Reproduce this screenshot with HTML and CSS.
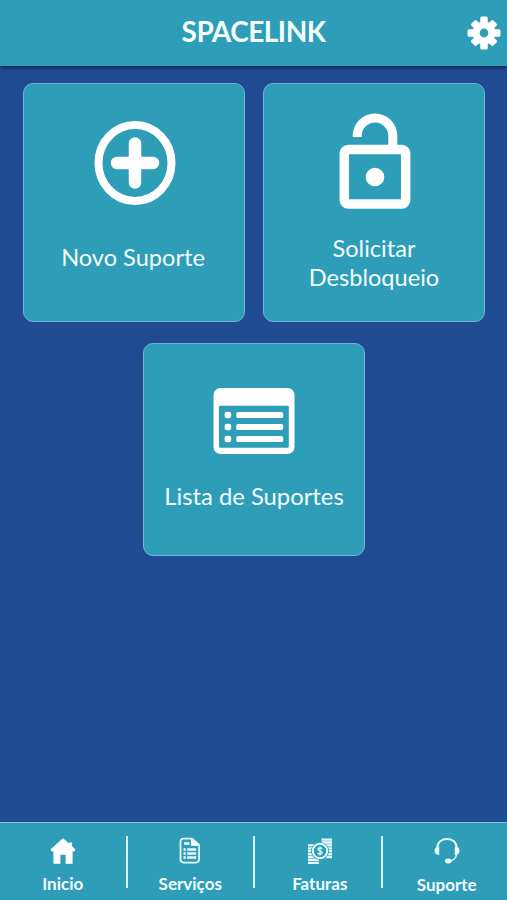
FILE: index.html
```html
<!DOCTYPE html>
<html lang="pt-BR">
<head>
    <meta charset="utf-8">
    <title>Spacelink</title>
    <link rel="stylesheet" href="styles.css">
</head>
<body>
    <header class="header">
        <h1>SPACELINK</h1>
        <button class="settings" aria-label="Configurações">
            <svg width="34" height="34" viewBox="-17 -17 34 34">
                <g stroke="#fff" stroke-width="3" stroke-linejoin="round" fill="#fff">
                    <path d="M-2.2-15h4.4v30h-4.4zM-15-2.2v4.4h30v-4.4z"/>
                    <path transform="rotate(45)" d="M-2.2-14h4.4v28h-4.4zM-14-2.2v4.4h28v-4.4z"/>
                </g>
                <circle r="11.5" fill="#fff"/>
                <circle class="hole" r="4.4"/>
            </svg>
        </button>
    </header>

    <main class="cards">
        <a class="card card-new">
            <svg width="82" height="84" viewBox="0 0 82 84" fill="none" stroke="#fff">
                <ellipse cx="41" cy="42" rx="36.5" ry="38" stroke-width="8"/>
                <path d="M41 22.5v39M23 42h36" stroke-width="12.5" stroke-linecap="round"/>
            </svg>
            <span>Novo Suporte</span>
        </a>
        <a class="card card-unlock">
            <svg width="72" height="96" viewBox="0 0 72 96" fill="none" stroke="#fff">
                <rect x="5.3" y="36.5" width="61.4" height="54.5" rx="4" stroke-width="9.5"/>
                <path d="M18.2 24V22.8a17.8 17.8 0 0 1 35.6 0V36" stroke-width="9"/>
                <circle cx="36" cy="64" r="9.3" fill="#fff" stroke="none"/>
            </svg>
            <span>Solicitar<br>Desbloqueio</span>
        </a>
        <a class="card card-list">
            <svg width="82" height="66" viewBox="0 0 82 66" fill="#fff">
                <path fill-rule="evenodd" d="M7.5 0h67a7 7 0 0 1 7 7v52a7 7 0 0 1-7 7h-67a7 7 0 0 1-7-7V7a7 7 0 0 1 7-7zM7.2 17.7a1.2 1.2 0 0 0-1.2 1.2v39.6a1.2 1.2 0 0 0 1.2 1.2h67.4a1.2 1.2 0 0 0 1.2-1.2V18.9a1.2 1.2 0 0 0-1.2-1.2z"/>
                <rect x="11.6" y="23.7" width="6.6" height="6.6" rx="2.4"/>
                <rect x="11.6" y="35.7" width="6.6" height="6.6" rx="2.4"/>
                <rect x="11.6" y="47.7" width="6.6" height="6.6" rx="2.4"/>
                <rect x="23.2" y="23.9" width="47" height="6.2" rx="1.8"/>
                <rect x="23.2" y="35.9" width="47" height="6.2" rx="1.8"/>
                <rect x="23.2" y="47.9" width="47" height="6.2" rx="1.8"/>
            </svg>
            <span>Lista de Suportes</span>
        </a>
    </main>

    <nav class="tabbar">
        <a class="tab">
            <svg width="28" height="28" viewBox="0 0 28 28" fill="#fff" stroke="#fff" stroke-linejoin="round">
                <path d="M14 2L2.2 12.6l1 1.4H5v12.2h5.8v-9h6.4v9H23V14h1.8l1-1.4-3.3-3V6h-1.8v2z" stroke-width="1.2"/>
            </svg>
            <span>Inicio</span>
        </a>
        <a class="tab">
            <svg width="28" height="28" viewBox="0 0 28 28" fill="none" stroke="#e9fbff">
                <path d="M7.5 1.6h8.6l7 6.4v14.6a3 3 0 0 1-3 3H7.5a3 3 0 0 1-3-3v-18a3 3 0 0 1 3-3z" stroke-width="1.8"/>
                <path d="M15.5 1.6v6.9H23z" fill="#e9fbff"/>
                <path d="M8 6.5h5.5" stroke-width="2.6"/>
                <path d="M7.5 12.5h2.3M7.5 16.5h2.3M7.5 20.5h2.3M11.2 12.5h9M11.2 16.5h9M11.2 20.5h9" stroke-width="2.6"/>
            </svg>
            <span>Serviços</span>
        </a>
        <a class="tab tab-bills">
            <svg width="28" height="28" viewBox="0 0 28 28" fill="none" stroke="#e9fbff">
                <path d="M15.5 2.6H26M15.5 5.5H26M16 8.4h10M18 11.3h8M19 14.2h7M19 17.1h7M17 20h9" stroke-width="2.3"/>
                <path d="M2 8.4h8M2 11.3h6M2 14.2h5M2 17.1h6M2 20h9M2 22.9h11M2 25.8h11" stroke-width="2.3"/>
                <circle class="coin-gap" cx="14" cy="14" r="9" stroke="none"/>
                <circle cx="14" cy="14" r="7.2" stroke-width="2"/>
                <path d="M16.2 11.8c-.5-1.3-4.3-1.4-4.3.5s4.3 1.3 4.3 3.3-3.8 2-4.5.4M14 9.4v9.2" stroke-width="1.3"/>
            </svg>
            <span>Faturas</span>
        </a>
        <a class="tab tab-support">
            <svg width="28" height="28" viewBox="0 0 28 28" fill="none" stroke="#e9fbff">
                <path d="M4.2 12C4.2 5.5 8.2 1.9 14 1.9S23.8 5.5 23.8 12" stroke-width="2"/>
                <path d="M23.5 17c-.4 4.5-3.2 6.5-7 7" stroke-width="1.5"/>
                <path d="M6.2 9.5V18C3 18 1.5 16 1.5 13.7s1.5-4.2 4.7-4.2zM21.8 9.5V18c3.2 0 4.7-2 4.7-4.3s-1.5-4.2-4.7-4.2z" fill="#e9fbff" stroke="none"/>
                <ellipse cx="15.3" cy="24" rx="3.4" ry="2.5" fill="#e9fbff" stroke="none"/>
            </svg>
            <span>Suporte</span>
        </a>
    </nav>
</body>
</html>
```

FILE: styles.css
```css
* {
    box-sizing: border-box;
}

body {
    margin: 0;
    height: 100vh;
    display: flex;
    flex-direction: column;
    overflow: hidden;
    background-color: #1f4b93;
    color: #f4fdff;
    font-family: Lato, "Liberation Sans", sans-serif;
}

svg {
    display: block;
    flex: none;
}

.header {
    height: 66px;
    flex: none;
    display: grid;
    grid-template-columns: 40px 1fr 40px;
    align-items: center;
    background-color: #2d9db8;
    box-shadow: 0 1px 4px rgba(0, 10, 40, 0.8);
}

.header h1 {
    grid-column: 2;
    margin: 0;
    padding-bottom: 5px;
    text-align: center;
    font-size: 28px;
    line-height: 34px;
    font-weight: 700;
    letter-spacing: -0.5px;
}

.settings {
    padding: 0;
    border: none;
    background: none;
    cursor: pointer;
}

.hole,
.coin-gap {
    fill: #2d9db8;
}

.cards {
    flex: 1;
    display: flex;
    flex-wrap: wrap;
    justify-content: center;
    align-content: flex-start;
    gap: 21px 18px;
    padding: 17px 22px 0 23px;
}

.card {
    width: 222px;
    height: 239px;
    display: flex;
    flex-direction: column;
    align-items: center;
    border: 1px solid #72b3d6;
    border-radius: 10px;
    background-color: #2d9db8;
    font-size: 23.6px;
    line-height: 29px;
    text-align: center;
}

.card-new {
    padding: 37px 2px 0 0;
    gap: 38px;
}

.card-new svg {
    margin-left: 4px;
}

.card-unlock {
    padding-top: 29px;
    gap: 25px;
}

.card-unlock svg {
    margin-left: 2px;
}

.card-list {
    height: 213px;
    padding-top: 44px;
    gap: 28px;
    font-size: 23.8px;
}

.tabbar {
    height: 78px;
    flex: none;
    display: flex;
    border-top: 1px solid #82c5dd;
    background-color: #2d9db8;
}

.tab {
    width: 127.5px;
    display: flex;
    flex-direction: column;
    align-items: center;
    gap: 9px;
    height: 52px;
    margin-top: 13px;
    padding-top: 1px;
    border-right: 2px solid #d8f3fa;
    font-size: 17px;
    line-height: 20px;
    font-weight: 700;
}

.tab-bills {
    padding-left: 4px;
}

.tab-support {
    flex: 1;
    padding-left: 4px;
    border-right: none;
}

.tab-support span {
    padding-top: 1px;
}
```
